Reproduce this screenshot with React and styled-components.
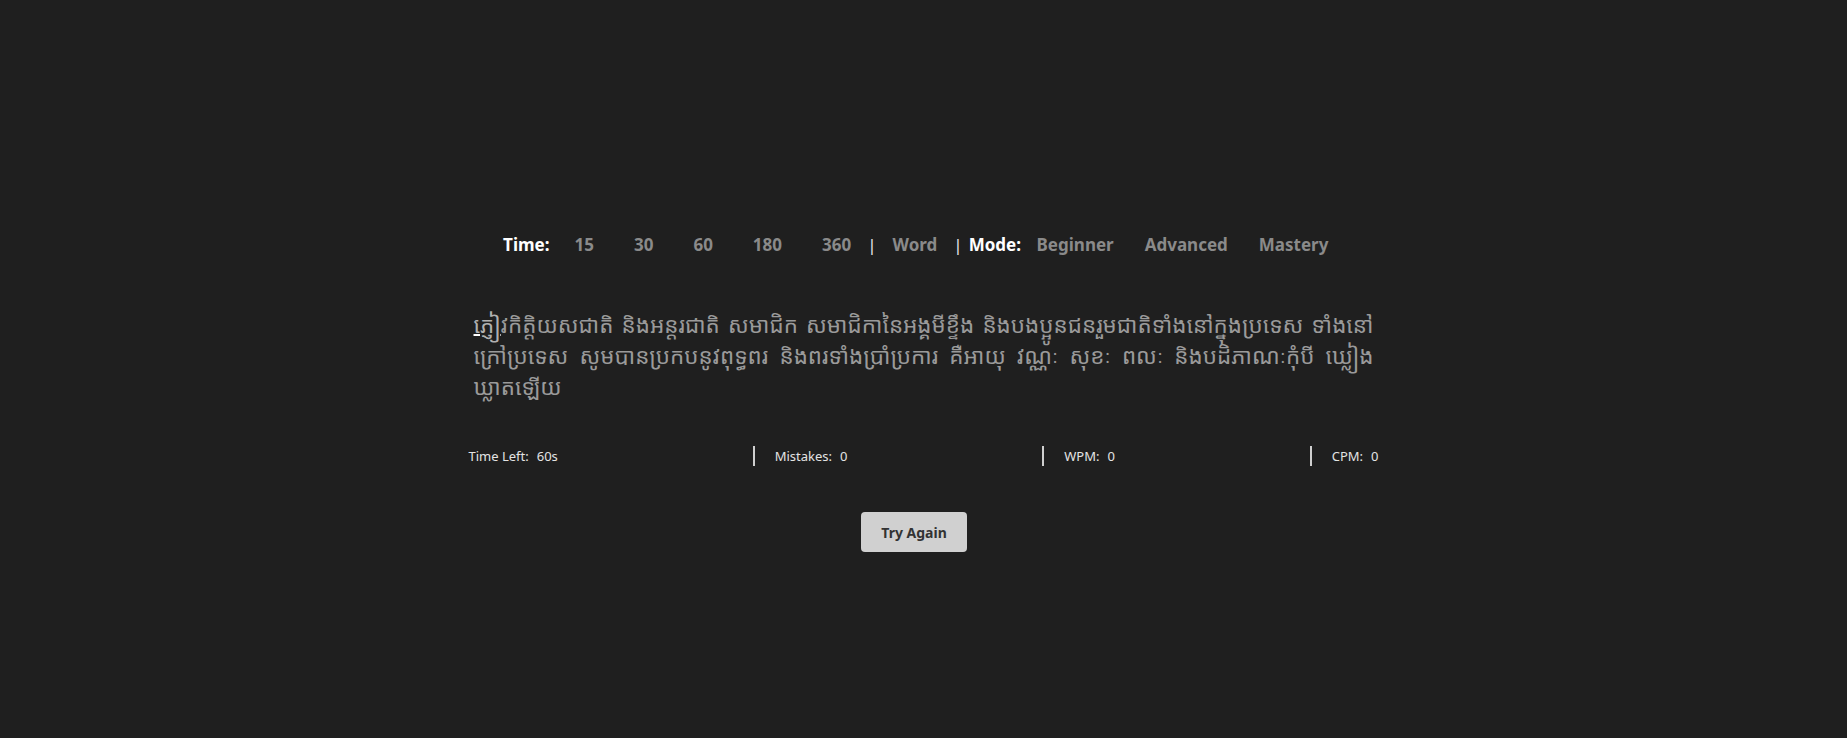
import styled, { createGlobalStyle } from "styled-components";

const GlobalStyle = createGlobalStyle`
  html, body {
    margin: 0;
    padding: 0;
    background-color: #1f1f1f;
    font-family: "Noto Sans", "Open Sans", sans-serif;
  }
`;

const text =
  "ភ្ញៀវកិត្តិយសជាតិ និងអន្តរជាតិ សមាជិក សមាជិកានៃអង្គមីខ្ទឹង និងបងប្អូនជនរួមជាតិទាំងនៅក្នុងប្រទេស ទាំងនៅក្រៅប្រទេស សូមបានប្រកបនូវពុទ្ធពរ និងពរទាំងប្រាំប្រការ គឺអាយុ វណ្ណៈ សុខៈ ពលៈ និងបដិភាណៈកុំបី ឃ្លៀង";
const tail = "ឃ្លាតឡើយ";

const times = [15, 30, 60, 180, 360];
const modes = ["Beginner", "Advanced", "Mastery"];

const App = () => {
  const first = "ភ្ញៀ";
  const rest = text.slice(first.length);

  return (
    <Page>
      <GlobalStyle />
      <Nav>
        <Label>Time:</Label>
        {times.map((t) => (
          <Option key={t} wide>
            {t}
          </Option>
        ))}
        <Pipe>|</Pipe>
        <Option wide>Word</Option>
        <Pipe>|</Pipe>
        <Label spaced>Mode:</Label>
        {modes.map((m) => (
          <Option key={m}>{m}</Option>
        ))}
      </Nav>

      <Passage>
        <Current>{first}</Current>
        {rest}
        <wbr />
        <Word>{tail}</Word>
      </Passage>

      <Stats>
        <Stat>
          Time Left: <Value>60s</Value>
        </Stat>
        <Stat divided>
          Mistakes: <Value>0</Value>
        </Stat>
        <Stat divided>
          WPM: <Value>0</Value>
        </Stat>
        <Stat divided>
          CPM: <Value>0</Value>
        </Stat>
      </Stats>

      <ButtonRow>
        <RetryButton>Try Again</RetryButton>
      </ButtonRow>
    </Page>
  );
};

const Page = styled.div`
  min-height: 100vh;
  box-sizing: border-box;
  padding-top: 231px;
  display: flex;
  flex-direction: column;
  align-items: center;
`;

const Nav = styled.div`
  display: flex;
  align-items: center;
  height: 28px;
  font-size: 17px;
  font-weight: 700;
  line-height: 28px;
`;

const Label = styled.span`
  color: #ffffff;
  margin-left: ${(p) => (p.spaced ? "10px" : "0")};
  margin-right: ${(p) => (p.spaced ? "0" : "5px")};
`;

const Option = styled.span`
  color: #8a8a8a;
  padding: 0 ${(p) => (p.wide ? "20px" : "15.5px")};
  cursor: pointer;
`;

const Pipe = styled.span`
  color: #e8e8e8;
  font-weight: 400;
  font-size: 17px;
  margin: 0 -4px;
`;

const Passage = styled.p`
  width: 900px;
  margin: 50px 0 0;
  color: #9a9a9a;
  font-family: "Noto Sans Khmer", "Khmer OS", "Noto Sans", sans-serif;
  font-size: 22.4px;
  line-height: 31px;
  text-align: justify;
`;

const Word = styled.span`
  white-space: nowrap;
`;

const Current = styled.span`
  color: #b0b0b0;
  text-decoration: underline;
  text-decoration-color: #ffffff;
  text-decoration-thickness: 2px;
`;

const Stats = styled.div`
  width: 910px;
  margin-top: 44px;
  display: flex;
  justify-content: space-between;
  align-items: center;
  font-size: 13px;
  color: #e4e4e4;
`;

const Stat = styled.div`
  display: flex;
  align-items: center;
  height: 20px;
  padding-left: ${(p) => (p.divided ? "20px" : "0")};
  border-left: ${(p) => (p.divided ? "2px solid #cfcfcf" : "none")};
`;

const Value = styled.span`
  margin-left: 8px;
`;

const ButtonRow = styled.div`
  margin-top: 46px;
  margin-right: 19px;
`;

const RetryButton = styled.button`
  width: 106px;
  height: 40px;
  border: none;
  border-radius: 4px;
  background-color: #d0d0d0;
  color: #333333;
  font-family: "Noto Sans", sans-serif;
  font-size: 14px;
  font-weight: 700;
  cursor: pointer;
`;

export default App;
